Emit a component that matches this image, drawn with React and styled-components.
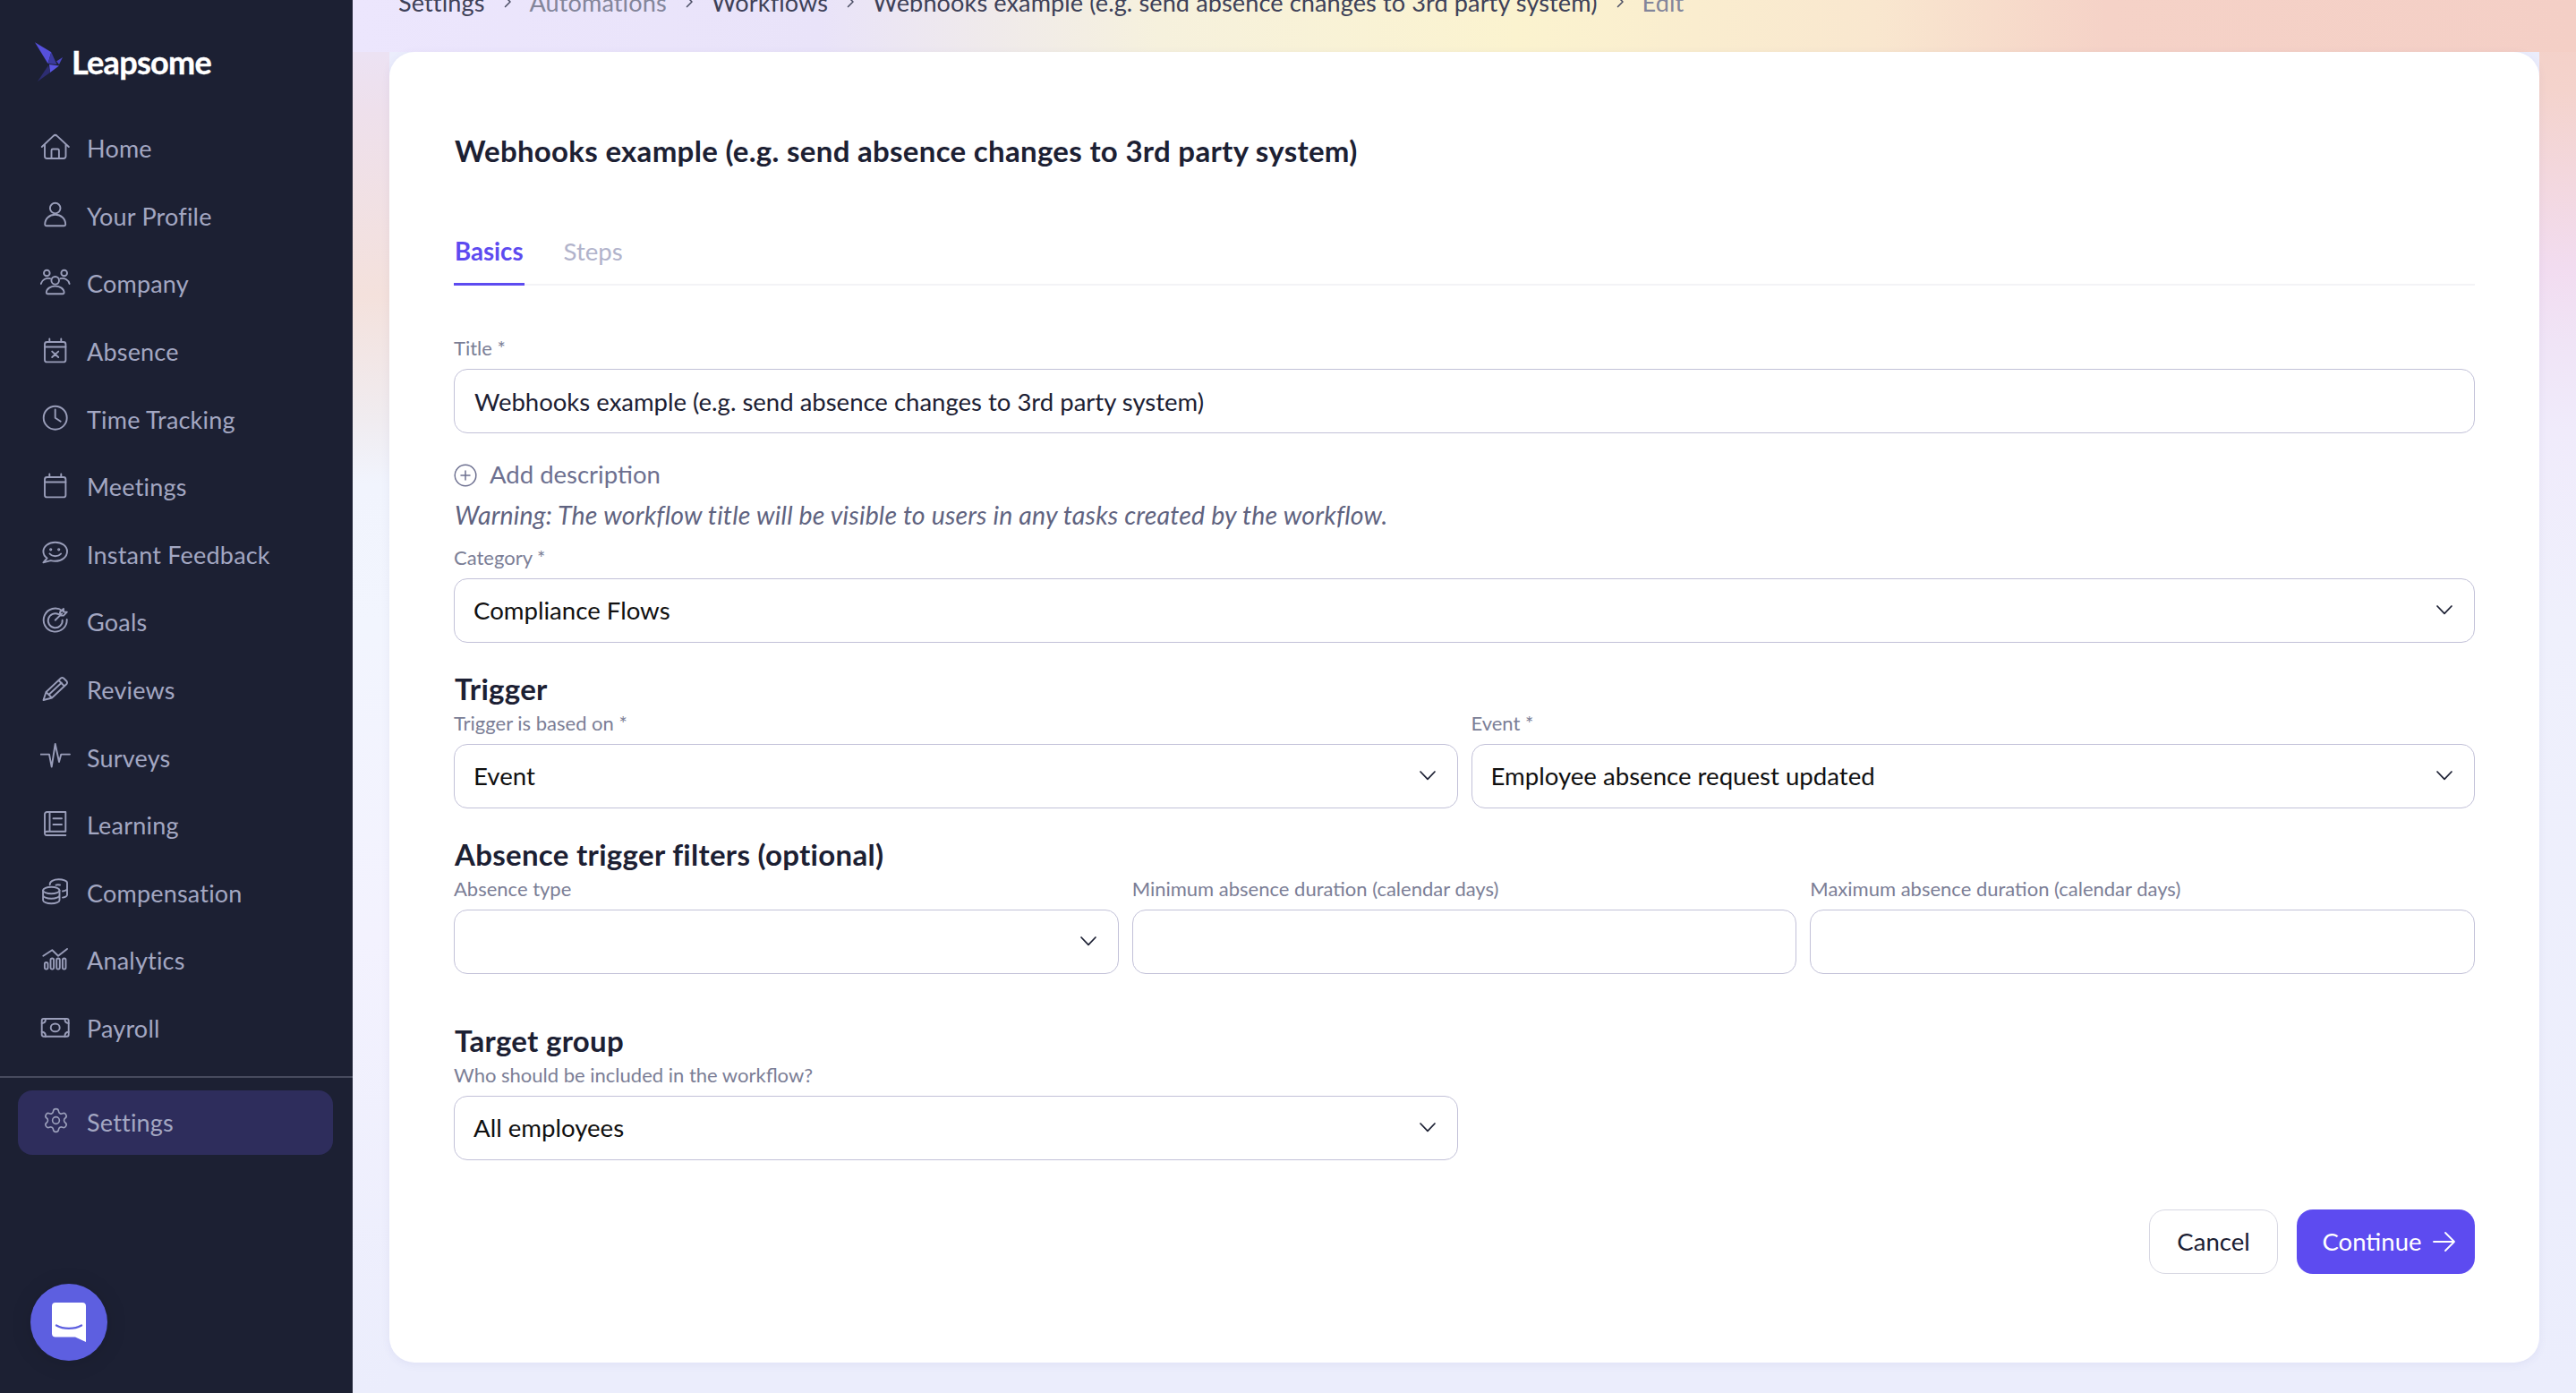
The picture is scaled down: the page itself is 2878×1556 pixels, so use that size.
import React from 'react';
import styled, { createGlobalStyle } from 'styled-components';
import { Settings as Gear } from 'lucide-react';

const FONT = `"Lato", "Noto Sans", "Liberation Sans", sans-serif`;

const Global = createGlobalStyle`
  html, body { margin: 0; padding: 0; background: #ebedfc; }
  * { box-sizing: border-box; }
  body { font-family: ${FONT}; }
`;

const Page = styled.div`
  display: flex;
  width: 2878px;
  height: 1556px;
  overflow: hidden;
  position: relative;
`;

const Sidebar = styled.aside`
  width: 394px;
  flex: none;
  background: #1c2033;
  display: flex;
  flex-direction: column;
`;

const Brand = styled.div`
  height: 128px;
  display: flex;
  align-items: flex-start;
  padding: 40px 0 0 30px;
`;

const BrandMark = styled.svg`
  width: 60px;
  height: 60px;
  flex: none;
`;

const BrandName = styled.span`
  margin: 7px 0 0 -10px;
  font-size: 36px;
  line-height: 44px;
  font-weight: 700;
  letter-spacing: -0.7px;
  -webkit-text-stroke: 0.4px #fff;
  color: #fff;
`;

const Nav = styled.nav`
  display: flex;
  flex-direction: column;
`;

const NavRow = styled.a`
  height: 75.6px;
  display: flex;
  align-items: center;
  padding-left: 45px;
  gap: 18px;
  font-size: 27px;
  letter-spacing: 0.2px;
  color: #a3a7c2;
`;

const Rule = styled.div`
  height: 2px;
  background: #474a5e;
  margin-top: 16px;
`;

const ActiveRow = styled.a`
  height: 72px;
  margin: 14px 22px 0 20px;
  border-radius: 16px;
  background: #2e2d5c;
  display: flex;
  align-items: center;
  padding: 0 0 2px 25px;
  gap: 18px;
  font-size: 27px;
  letter-spacing: 0.2px;
  color: #a3a7c2;
`;

const Launcher = styled.div`
  position: absolute;
  left: 34px;
  top: 1434px;
  width: 86px;
  height: 86px;
  border-radius: 50%;
  background: #5d5fe0;
  box-shadow: 0 2px 24px rgba(0, 0, 0, 0.12);
  display: flex;
  align-items: center;
  justify-content: center;
`;

const Main = styled.main`
  flex: 1;
  display: flex;
  flex-direction: column;
  padding: 0 41px 34px;
  background:
    linear-gradient(90deg, #ece6fd 0, #e9e3f9 520px, #f6f1dd 900px, #fbf3cf 1300px, #f9e7cf 1700px, #f5d2c7 1960px, #f4cfc6 2484px) top / 100% 58px no-repeat,
    linear-gradient(180deg, #eae4fa 0, #eee0ec 120px, #f4e1dc 330px, #f0ecf0 470px, #f1f4fd 540px, #f2f5fe 700px, #f3f2fe 1050px, #ebedfc 1556px) left top / 41px 1556px no-repeat,
    linear-gradient(180deg, #f4cfc6 0, #f4d3cc 100px, #f2dcf0 300px, #f0e4f6 380px, #f0ebfb 480px, #eff0fc 700px, #ebedfc 1556px) right top / 41px 1556px no-repeat,
    #ebedfc;
`;

const Crumbs = styled.div`
  display: flex;
  align-items: center;
  height: 40px;
  margin: -18px 0 36px 10px;
  font-size: 27.1px;
  letter-spacing: 0.1px;
`;

const Crumb = styled.span`
  color: ${(p) => (p.$muted ? '#83859a' : '#3e4158')};
`;

const CrumbSep = styled.svg`
  width: 12px;
  height: 14px;
  margin: 0 19px;
  flex: none;
`;

const Card = styled.section`
  flex: 1;
  background: #fff;
  border-radius: 28px;
  padding: 92px 72px 0;
  box-shadow: 0 2px 10px rgba(90, 90, 160, 0.08);
  display: flex;
  flex-direction: column;
`;

const Title = styled.h1`
  margin: 0;
  padding: 0 0 4px 1px;
  font-size: 33px;
  line-height: 36px;
  font-weight: 700;
  letter-spacing: 0.3px;
  color: #1c2033;
`;

const Tabs = styled.div`
  margin-top: 65px;
  height: 64px;
  display: flex;
  gap: 43px;
  border-bottom: 2px solid #f3f3f6;
`;

const Tab = styled.div`
  height: 64px;
  padding: 11px 1px 0;
  font-size: 27.6px;
  line-height: 30px;
  font-weight: ${(p) => (p.$active ? 700 : 400)};
  color: ${(p) => (p.$active ? '#5d4bf0' : '#b1b3cb')};
  border-bottom: ${(p) => (p.$active ? '3px solid #5d4bf0' : 'none')};
`;

const Label = styled.label`
  display: block;
  font-size: 22px;
  line-height: 22px;
  color: #7b7e96;
  margin-bottom: 10px;
  height: 24px;
  white-space: nowrap;
`;

const TitleField = styled.div`
  margin-top: 59px;
`;

const TextInput = styled.input`
  display: block;
  width: 100%;
  height: 72px;
  padding: 0 22px;
  border: 1px solid #c2c1d8;
  border-radius: 15px;
  background: #fff;
  font-family: ${FONT};
  font-size: 27.5px;
  color: #1c2033;
  outline: none;
`;

const Select = styled.div`
  height: 72px;
  padding: 0 21px 2px;
  border: 1px solid #c2c1d8;
  border-radius: 15px;
  background: #fff;
  display: flex;
  align-items: center;
  justify-content: space-between;
  font-size: 27.6px;
  color: #101010;
`;

const AddRow = styled.div`
  margin-top: 30px;
  height: 30px;
  display: flex;
  align-items: center;
  gap: 14px;
  font-size: 27.5px;
  color: #6d7090;
  margin-bottom: 2px;
`;

const AddIcon = styled.svg`
  flex: none;
  margin-top: 4px;
`;

const Warning = styled.p`
  margin: 13px 0 21px;
  padding-left: 1px;
  font-size: 28.5px;
  line-height: 32px;
  font-style: italic;
  letter-spacing: 0.17px;
  color: #5f6380;
`;

const Heading = styled.h2`
  margin: ${(p) => p.$gap}px 0 6px;
  padding: 0 0 4px 1px;
  font-size: 33px;
  line-height: 36px;
  font-weight: 700;
  letter-spacing: 0.3px;
  color: #1c2033;
`;

const Columns = styled.div`
  display: grid;
  grid-template-columns: repeat(${(p) => p.$cols}, 1fr);
  gap: 15px;
`;

const Actions = styled.div`
  margin-top: 55px;
  display: flex;
  justify-content: flex-end;
  gap: 21px;
`;

const Button = styled.button`
  height: 72px;
  border-radius: 18px;
  font-family: ${FONT};
  font-size: 27.5px;
  display: flex;
  align-items: center;
  justify-content: center;
  padding-bottom: 2px;
`;

const CancelButton = styled(Button)`
  width: 144px;
  padding-left: 0;
  padding-right: 0;
  background: #fff;
  border: 1px solid #d8d8e3;
  color: #1c2033;
`;

const ContinueButton = styled(Button)`
  width: 199px;
  gap: 13px;
  padding-left: 8px;
  padding-right: 0;
  background: #5d4bf0;
  border: none;
  color: #fff;
`;

const Ic = styled.svg`
  width: 34px;
  height: 34px;
  flex: none;
  fill: none;
  stroke: #9a9eba;
  stroke-width: 1.9;
  stroke-linecap: round;
  stroke-linejoin: round;
`;

const GearWrap = styled.span`
  width: 34px;
  height: 34px;
  flex: none;
  display: flex;
  align-items: center;
  justify-content: center;
  color: #9a9eba;
  margin-top: -3px;
`;

const Calendar = ({ children }) => (
  <Ic viewBox="0 0 34 34">
    <rect x="5" y="6" width="23.4" height="22.4" rx="2.5" />
    <path d="M5 11.5H28.4M10.3 2.5V6M23.3 2.5V6" />
    {children}
  </Ic>
);

const icons = {
  Home: (
    <Ic viewBox="0 0 34 34">
      <path d="M1.8 15L14.6 2.9a3 3 0 0 1 4.2 0L31.8 15M5 12V25.5A2.5 2.5 0 0 0 7.5 28H26a2.5 2.5 0 0 0 2.5-2.5V12M12.5 28V19a1.5 1.5 0 0 1 1.5-1.5h5.4a1.5 1.5 0 0 1 1.5 1.5V28" />
    </Ic>
  ),
  Profile: (
    <Ic viewBox="0 0 34 34">
      <circle cx="16.7" cy="8.6" r="5.8" />
      <path d="M6.7 28.3H26.7a1.5 1.5 0 0 0 1.5-1.5C28.2 20 23 15.8 16.7 15.8S5.2 20 5.2 26.8a1.5 1.5 0 0 0 1.5 1.5Z" />
    </Ic>
  ),
  Company: (
    <Ic viewBox="0 0 34 34">
      <circle cx="7.3" cy="5" r="3.3" />
      <circle cx="26.7" cy="5" r="3.3" />
      <circle cx="16.7" cy="13.3" r="4.3" />
      <path d="M8 28.3H25.4a1.2 1.2 0 0 0 1.2-1.2C26.6 22.5 22 19.6 16.7 19.6S6.8 22.5 6.8 27.1A1.2 1.2 0 0 0 8 28.3ZM0.8 17C1.8 12.5 6.5 10 11 11.2M32.6 17C31.6 12.5 26.9 10 22.4 11.2" />
    </Ic>
  ),
  Absence: (
    <Calendar>
      <path d="M13.2 16.6L20.2 23M20.2 16.6L13.2 23" />
    </Calendar>
  ),
  Time: (
    <Ic viewBox="0 0 34 34">
      <circle cx="16.7" cy="15.7" r="13" />
      <path d="M16.7 6.5V15.7L22.7 19.7" />
    </Ic>
  ),
  Meetings: <Calendar />,
  Feedback: (
    <Ic viewBox="0 0 34 34">
      <path d="M16.7 3.7C9.4 3.7 3.4 8.3 3.4 14c0 3 1.6 5.6 4.2 7.5L3.4 26.3l8.2-2.1c1.6.4 3.3.6 5.1.6C24 24.8 30 20 30 14S24 3.7 16.7 3.7Z" />
      <path d="M10.5 16.5c3 3.6 9.6 3.6 12.6 0" />
      <circle cx="11.7" cy="11.8" r="0.7" />
      <circle cx="20.7" cy="11.8" r="0.7" />
    </Ic>
  ),
  Goals: (
    <Ic viewBox="0 0 34 34">
      <path d="M24.5 4.2A13 13 0 1 0 29.7 14" />
      <path d="M20.5 8.2A8 8 0 1 0 24.7 14.6" />
      <path d="M16.7 14.7L24.2 7.4M22 5.8V9.6H26L29.8 5.6H26V2Z" />
    </Ic>
  ),
  Reviews: (
    <Ic viewBox="0 0 34 34">
      <path d="M3.5 28L6.5 19 23 3.5Q24.5 2.5 26 3.5L29.5 7Q30.5 8.5 29.5 10L13 25.5ZM6.5 19L13 25.5M20.5 6L27 12.5M10 21.5L23.8 8.6" />
    </Ic>
  ),
  Surveys: (
    <Ic viewBox="0 0 34 34">
      <path d="M0.6 13.6H10L12.7 27.6 16.7 2 21 22 23.3 13.6H33" />
    </Ic>
  ),
  Learning: (
    <Ic viewBox="0 0 34 34">
      <path d="M28.3 23.7V2H7.5A2.5 2.5 0 0 0 5 4.5V26a2.2 2.2 0 0 1 2.5-2.3H28.3M28.3 28H7.5A2.3 2.3 0 0 1 5 26M10.5 2V23.7M14.5 9.3H24M14.5 16H24" />
    </Ic>
  ),
  Compensation: (
    <Ic viewBox="0 0 34 34">
      <ellipse cx="12.3" cy="14.5" rx="9.2" ry="3.8" />
      <path d="M3.1 14.5V25.5C3.1 27.6 7.2 29.3 12.3 29.3S21.5 27.6 21.5 25.5V14.5M3.1 20C3.1 22.1 7.2 23.8 12.3 23.8S21.5 22.1 21.5 20" />
      <path d="M10.7 8.2C10.4 4.5 15 2.2 20.5 2.2C25.6 2.2 30 3.9 30 6V19.5C30 20.8 28.3 22 25 22.6M30 12.5C30 13.8 28 15 25 15.5M22 8.5C20 8.2 19 8 17.5 8.7" />
    </Ic>
  ),
  Analytics: (
    <Ic viewBox="0 0 34 34">
      <path d="M3.3 11.7L13.3 5.3 20 11.7 30 3.9" />
      <rect x="4.9" y="19" width="3.6" height="7.6" rx="1.8" />
      <rect x="11.5" y="14.5" width="3.6" height="12.1" rx="1.8" />
      <rect x="18.2" y="14.5" width="3.6" height="12.1" rx="1.8" />
      <rect x="24.9" y="14.5" width="3.6" height="12.1" rx="1.8" />
    </Ic>
  ),
  Payroll: (
    <Ic viewBox="0 0 34 34">
      <rect x="1.7" y="6" width="30" height="19.7" rx="2" />
      <ellipse cx="16.7" cy="15.9" rx="5" ry="4.4" />
      <path d="M1.7 11C4.5 11 6 9.2 6 6M31.7 11C29 11 27.4 9.2 27.4 6M1.7 20.7C4.5 20.7 6 22.5 6 25.7M31.7 20.7C29 20.7 27.4 22.5 27.4 25.7" />
    </Ic>
  ),
};

const navItems = [
  ['Home', 'Home'],
  ['Your Profile', 'Profile'],
  ['Company', 'Company'],
  ['Absence', 'Absence'],
  ['Time Tracking', 'Time'],
  ['Meetings', 'Meetings'],
  ['Instant Feedback', 'Feedback'],
  ['Goals', 'Goals'],
  ['Reviews', 'Reviews'],
  ['Surveys', 'Surveys'],
  ['Learning', 'Learning'],
  ['Compensation', 'Compensation'],
  ['Analytics', 'Analytics'],
  ['Payroll', 'Payroll'],
];

const ChevronSvg = styled.svg`
  width: 20px;
  height: 12px;
  flex: none;
  margin-right: 2px;
  fill: none;
  stroke: #1c2033;
  stroke-width: 1.7;
  stroke-linecap: round;
  stroke-linejoin: round;
`;

const Chevron = () => (
  <ChevronSvg viewBox="0 0 20 12">
    <path d="M2 2L10 10.4 18 2" />
  </ChevronSvg>
);

const Sep = () => (
  <CrumbSep viewBox="0 0 12 14" fill="none" stroke="#4a4d63" strokeWidth="1.5" strokeLinecap="round" strokeLinejoin="round">
    <path d="M3.5 1.5L9 7 3.5 12.5" />
  </CrumbSep>
);

export default function App() {
  const name = 'Webhooks example (e.g. send absence changes to 3rd party system)';
  return (
    <Page>
      <Global />
      <Sidebar>
        <Brand>
          <BrandMark viewBox="0 0 60 60">
            <polygon points="9,7.3 27.3,18.3 23.5,31" fill="#5650dc" />
            <polygon points="27.3,18.3 33.5,32 23.5,31" fill="#3b3a9e" />
            <polygon points="40,24 36,32 33,28.5" fill="#4b47c4" />
            <polygon points="25,32 36,33.5 26,41" fill="#5a55e2" />
            <polygon points="24,33 26,41 12,51" fill="#2d2d72" />
          </BrandMark>
          <BrandName>Leapsome</BrandName>
        </Brand>
        <Nav>
          {navItems.map(([label, key]) => (
            <NavRow key={label}>
              {icons[key]}
              {label}
            </NavRow>
          ))}
        </Nav>
        <Rule />
        <ActiveRow>
          <GearWrap>
            <Gear size={31} strokeWidth={1.25} />
          </GearWrap>
          Settings
        </ActiveRow>
      </Sidebar>
      <Launcher>
        <svg width="40" height="44" viewBox="0 0 40 44">
          <path d="M5 0H35a4 4 0 0 1 4 4V44L27 38.5H5a4 4 0 0 1-4-4V4a4 4 0 0 1 4-4Z" fill="#fff" />
          <path d="M6 25.5C14 30 26 30 34 25.5" fill="none" stroke="#5d5fe0" strokeWidth="2.4" strokeLinecap="round" />
        </svg>
      </Launcher>
      <Main>
        <Crumbs>
          <Crumb>Settings</Crumb>
          <Sep />
          <Crumb $muted>Automations</Crumb>
          <Sep />
          <Crumb>Workflows</Crumb>
          <Sep />
          <Crumb>{name}</Crumb>
          <Sep />
          <Crumb $muted>Edit</Crumb>
        </Crumbs>
        <Card>
          <Title>{name}</Title>
          <Tabs>
            <Tab $active>Basics</Tab>
            <Tab>Steps</Tab>
          </Tabs>
          <TitleField>
            <Label>Title *</Label>
            <TextInput readOnly value={name} />
          </TitleField>
          <AddRow>
            <AddIcon width="26" height="26" viewBox="0 0 26 26" fill="none" stroke="#6d7090" strokeWidth="1.5" strokeLinecap="round">
              <circle cx="13" cy="13" r="11.8" />
              <path d="M13 8V18M8 13H18" />
            </AddIcon>
            Add description
          </AddRow>
          <Warning>Warning: The workflow title will be visible to users in any tasks created by the workflow.</Warning>
          <div>
            <Label>Category *</Label>
            <Select>
              Compliance Flows
              <Chevron />
            </Select>
          </div>
          <Heading $gap={33}>Trigger</Heading>
          <Columns $cols={2}>
            <div>
              <Label>Trigger is based on *</Label>
              <Select>
                Event
                <Chevron />
              </Select>
            </div>
            <div>
              <Label>Event *</Label>
              <Select>
                Employee absence request updated
                <Chevron />
              </Select>
            </div>
          </Columns>
          <Heading $gap={33}>Absence trigger filters (optional)</Heading>
          <Columns $cols={3}>
            <div>
              <Label>Absence type</Label>
              <Select>
                <span />
                <Chevron />
              </Select>
            </div>
            <div>
              <Label>Minimum absence duration (calendar days)</Label>
              <TextInput readOnly value="" />
            </div>
            <div>
              <Label>Maximum absence duration (calendar days)</Label>
              <TextInput readOnly value="" />
            </div>
          </Columns>
          <Heading $gap={56}>Target group</Heading>
          <Columns $cols={2}>
            <div>
              <Label>Who should be included in the workflow?</Label>
              <Select>
                All employees
                <Chevron />
              </Select>
            </div>
          </Columns>
          <Actions>
            <CancelButton>Cancel</CancelButton>
            <ContinueButton>
              Continue
              <svg width="26" height="24" viewBox="0 0 26 24" fill="none" stroke="#fff" strokeWidth="1.8" strokeLinecap="round" strokeLinejoin="round">
                <path d="M1 12H24M14 2L24 12 14 22" />
              </svg>
            </ContinueButton>
          </Actions>
        </Card>
      </Main>
    </Page>
  );
}
